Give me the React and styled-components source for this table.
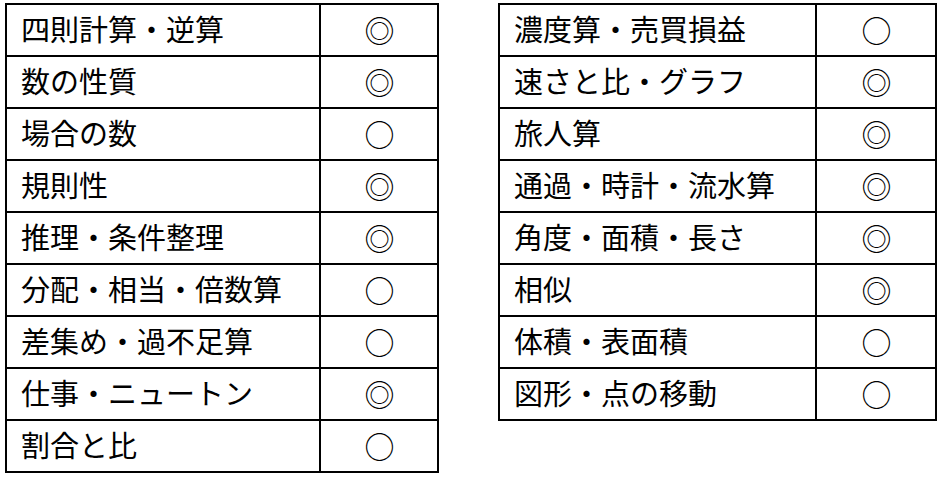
import React from 'react';
import styled, { createGlobalStyle } from 'styled-components';

const GlobalStyle = createGlobalStyle`
  html, body {
    margin: 0;
    padding: 0;
    background: #ffffff;
  }
  body {
    font-family: "Noto Sans CJK JP", "Noto Sans", sans-serif;
    color: #000;
  }
`;

const Page = styled.div`
  display: flex;
  align-items: flex-start;
  gap: 59px;
  padding: 3px 0 0 5px;
`;

const Table = styled.div`
  display: grid;
  grid-template-columns: ${({ $nameWidth, $markWidth }) => `${$nameWidth}px ${$markWidth}px`};
  grid-auto-rows: 52px;
  border-top: 2px solid #000;
  border-left: 2px solid #000;
`;

const NameCell = styled.div`
  display: flex;
  align-items: center;
  padding: 0 0 4px 14px;
  border-right: 2px solid #000;
  border-bottom: 2px solid #000;
  font-size: 29px;
  line-height: 1;
  white-space: nowrap;
`;

const MarkCell = styled.div`
  display: flex;
  align-items: center;
  justify-content: center;
  padding: 0 0 3px 1px;
  border-right: 2px solid #000;
  border-bottom: 2px solid #000;
  font-size: 30px;
  line-height: 1;
`;

const leftRows = [
  ['四則計算・逆算', '◎'],
  ['数の性質', '◎'],
  ['場合の数', '○'],
  ['規則性', '◎'],
  ['推理・条件整理', '◎'],
  ['分配・相当・倍数算', '○'],
  ['差集め・過不足算', '○'],
  ['仕事・ニュートン', '◎'],
  ['割合と比', '○'],
];

const rightRows = [
  ['濃度算・売買損益', '○'],
  ['速さと比・グラフ', '◎'],
  ['旅人算', '◎'],
  ['通過・時計・流水算', '◎'],
  ['角度・面積・長さ', '◎'],
  ['相似', '◎'],
  ['体積・表面積', '○'],
  ['図形・点の移動', '○'],
];

function TopicTable({ rows, nameWidth, markWidth }) {
  return (
    <Table $nameWidth={nameWidth} $markWidth={markWidth}>
      {rows.map(([name, mark]) => (
        <React.Fragment key={name}>
          <NameCell>{name}</NameCell>
          <MarkCell>{mark}</MarkCell>
        </React.Fragment>
      ))}
    </Table>
  );
}

export default function App() {
  return (
    <>
      <GlobalStyle />
      <Page>
        <TopicTable rows={leftRows} nameWidth={314} markWidth={118} />
        <TopicTable rows={rightRows} nameWidth={317} markWidth={120} />
      </Page>
    </>
  );
}
